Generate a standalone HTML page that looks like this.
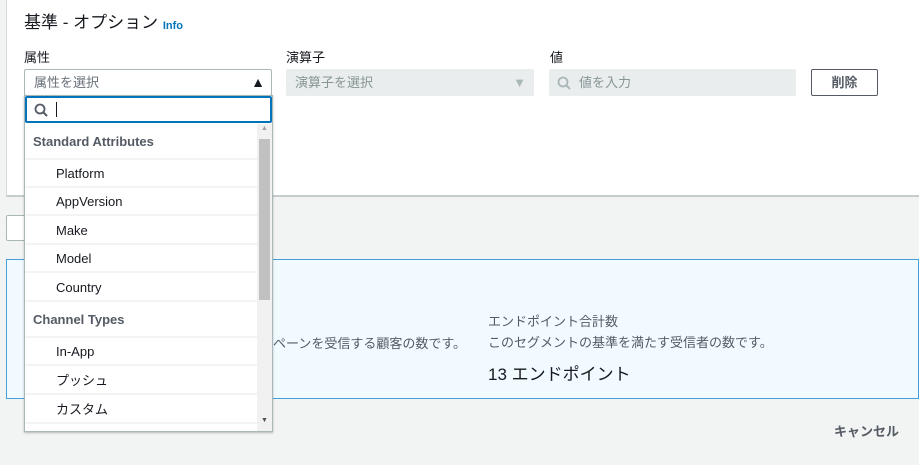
<!DOCTYPE html>
<html><head><meta charset="utf-8"><style>
*{box-sizing:border-box;margin:0;padding:0}
body{width:919px;height:465px;background:#f2f3f3;font-family:"Liberation Sans","Noto Sans CJK JP",sans-serif;color:#16191f;position:relative;overflow:hidden;font-size:13px}
.abs{position:absolute}
.panel{left:6px;top:0;width:913px;height:197px;background:#fff;border-left:1px solid #d5dbdb;border-bottom:2px solid #c6cccc}
.field{height:27px;border-radius:2px;font-size:13px;line-height:27px;padding-left:9px}
.dd{left:24px;top:95px;width:249px;height:337px;background:#fff;border:1px solid #aab7b8;box-shadow:0 1px 2px rgba(0,0,0,.25)}
.row{position:absolute;left:0;width:232px;height:28px;line-height:28px;border-bottom:2px solid #f2f3f3;font-size:13px;padding-left:31px}
.hd{font-weight:bold;color:#545b64;padding-left:8px}
</style></head><body>
<div class="abs panel"></div>
<div class="abs" style="left:24px;top:8px;font-size:17px">基準 - オプション <span style="font-size:11px;color:#0073bb;font-weight:bold;position:relative;top:1px">Info</span></div>
<div class="abs" style="left:24px;top:47px">属性</div>
<div class="abs" style="left:286px;top:47px">演算子</div>
<div class="abs" style="left:550px;top:47px">値</div>
<div class="abs field" style="left:24px;top:69px;width:248px;border:1px solid #aab7b8;color:#687078;line-height:25px">属性を選択<span style="position:absolute;right:6px;top:0;font-size:14px;color:#16191f">▲</span></div>
<div class="abs field" style="left:286px;top:69px;width:248px;background:#eaeded;color:#879596">演算子を選択<span style="position:absolute;right:8px;top:0;font-size:13px;color:#aab7b8">▼</span></div>
<div class="abs field" style="left:549px;top:69px;width:247px;background:#eaeded;color:#879596;padding-left:30px">値を入力
<svg class="abs" style="left:8px;top:7px" width="14" height="14"><circle cx="6" cy="6" r="4.5" fill="none" stroke="#aab7b8" stroke-width="1.8"/><path d="M9.5 9.5L13 13" stroke="#aab7b8" stroke-width="2"/></svg></div>
<div class="abs" style="left:811px;top:69px;width:67px;height:27px;border:1px solid #545b64;border-radius:2px;text-align:center;line-height:25px;font-weight:bold;color:#545b64">削除</div>
<div class="abs" style="left:6px;top:215px;width:40px;height:26px;background:#fff;border:1px solid #aab7b8;border-radius:2px"></div>
<div class="abs" style="left:6px;top:259px;width:913px;height:140px;background:#f1faff;border:1px solid #44a0d9"></div>
<div class="abs" style="left:273px;top:333px;color:#545b64">ペーンを受信する顧客の数です。</div>
<div class="abs" style="left:488px;top:311px;color:#545b64">エンドポイント合計数</div>
<div class="abs" style="left:488px;top:332px;color:#545b64">このセグメントの基準を満たす受信者の数です。</div>
<div class="abs" style="left:488px;top:360px;font-size:17px">13 エンドポイント</div>
<div class="abs" style="left:834px;top:421px;font-weight:bold;color:#545b64">キャンセル</div>
<div class="abs dd">
 <div class="abs" style="left:0;top:0;width:247px;height:27px;border:2px solid #0073bb;border-radius:2px"></div>
 <svg class="abs" style="left:9px;top:7px" width="14" height="14"><circle cx="6" cy="6" r="4.5" fill="none" stroke="#545b64" stroke-width="1.8"/><path d="M9.5 9.5L13 13" stroke="#545b64" stroke-width="2"/></svg>
 <div class="abs" style="left:31px;top:6px;width:1px;height:15px;background:#16191f"></div>
 <div class="row hd" style="top:30px;height:34px;line-height:32px">Standard Attributes</div>
 <div class="row" style="top:64px">Platform</div>
 <div class="row" style="top:92px">AppVersion</div>
 <div class="row" style="top:121px">Make</div>
 <div class="row" style="top:149px">Model</div>
 <div class="row" style="top:178px">Country</div>
 <div class="row hd" style="top:206px;height:36px;line-height:36px">Channel Types</div>
 <div class="row" style="top:242px">In-App</div>
 <div class="row" style="top:271px">プッシュ</div>
 <div class="row" style="top:300px">カスタム</div>
 <div class="abs" style="left:232px;top:28px;width:15px;height:307px;background:#f1f1f1"></div>
 <div class="abs" style="left:234px;top:43px;width:11px;height:161px;background:#c1c1c1"></div>
 <div class="abs" style="left:236px;top:29px;font-size:7px;color:#a3a3a3">▲</div>
 <div class="abs" style="left:236px;top:321px;font-size:7px;color:#505050">▼</div>
</div>
</body></html>
